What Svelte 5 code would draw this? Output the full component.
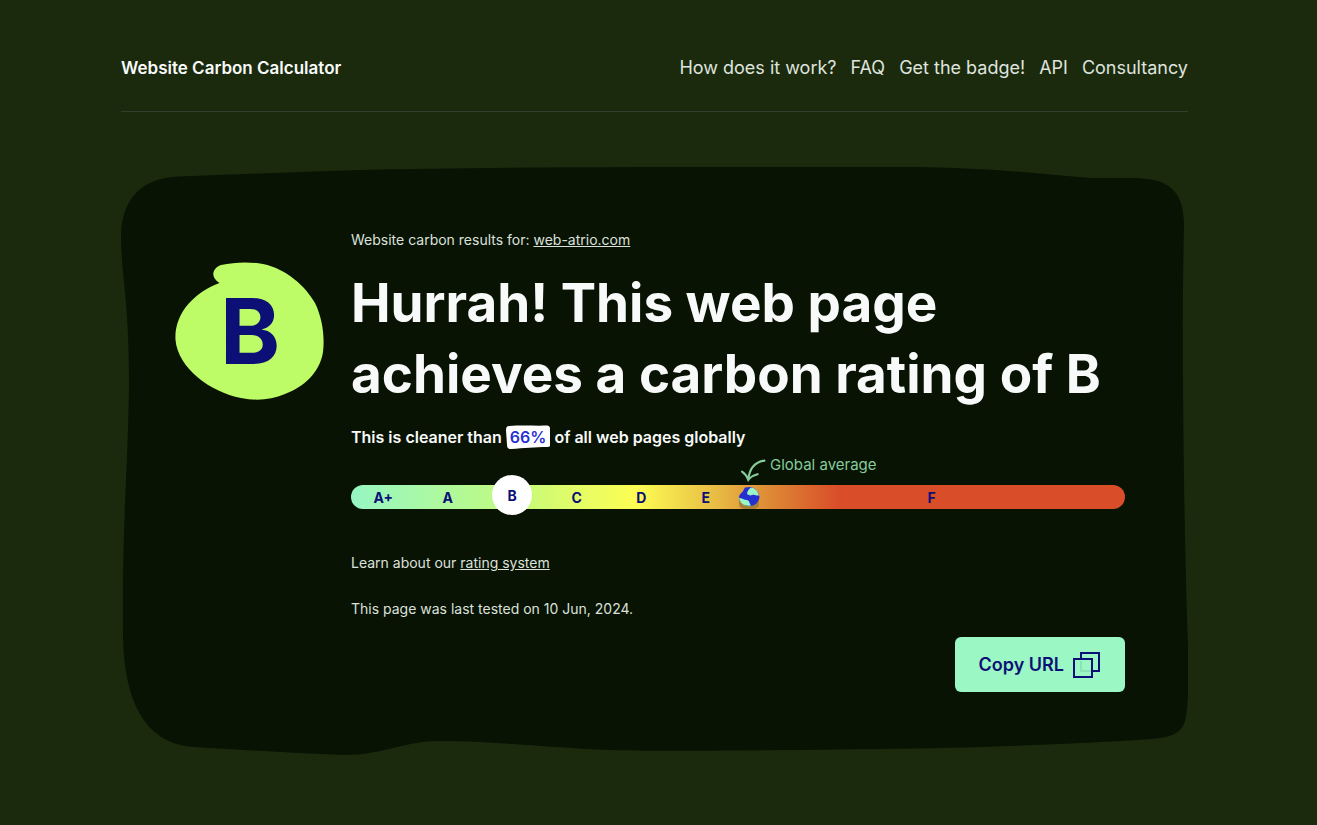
<script>
  const links = ['How does it work?', 'FAQ', 'Get the badge!', 'API', 'Consultancy'];
  const grades = ['A+', 'A', 'B', 'C', 'D', 'E', 'F'];
  const rating = 'B';
  const cleanerThan = 66;

  function copyUrl() {
    navigator.clipboard?.writeText(location.href);
  }
</script>

<div class="page">
  <header>
    <a class="brand" href="#home">Website Carbon Calculator</a>
    <nav>
      {#each links as link}
        <a href="#top">{link}</a>
      {/each}
    </nav>
  </header>

  <main>
    <svg class="blob" viewBox="0 0 1067 588" preserveAspectRatio="none" aria-hidden="true">
      <path
        d="M58 9.500C120 7 180 5 240 3C400 -0.500 640 -0.500 800 0C890 2 925 8 970 11C1000 11.500 1015 10 1033 13C1054 18 1063 32 1063 58C1062 110 1061.500 150 1062 210C1062.500 300 1064 380 1066 450C1068 500 1068 530 1065 550C1062 566 1052 570 1030 572C960 577 850 581 760 582C660 583 560 585 490 583C420 580 370 574 320 574C280 574 265 588 222 588C175 586 120 583 73 580C22 577 2 530 2 465C1 350 7 310 8 215C8 130 0 110 0 66C2 32 20 11 58 9.500Z"
      />
    </svg>

    <div class="badge">
      <svg viewBox="0 0 150 139" aria-hidden="true">
        <path
          d="M44.500 21C36 16 36 7 46 3C60 0 74 -0.500 88 2C112 7 131 25 140 41C147 55 150 74 148 90C145 110 129 125 110 132C96 138 81 139 66 136C35 130 3 106 0.500 78C-1 51 20 30 44.500 21Z"
        />
      </svg>
      <span>{rating}</span>
    </div>

    <section>
      <p class="small">Website carbon results for: <a href="#site">web-atrio.com</a></p>
      <h1>Hurrah! This web page achieves a carbon rating of {rating}</h1>
      <p class="cleaner">
        This is cleaner than
        <span class="percent">
          <svg viewBox="0 0 44 23" preserveAspectRatio="none" aria-hidden="true">
            <path d="M3 1C15 0 30 1 41 0.500C43 1 43.500 2 43.500 4L44 18C44 20 43 21 41 21C28 21 18 22 5 23C2 23 1 22 1 19L0 5C0 2 1 1 3 1Z" />
          </svg>
          <span>{cleanerThan}%</span>
        </span>
        of all web pages globally
      </p>

      <div class="scale">
        {#each grades as grade}
          <span class="grade" class:current={grade === rating}>
            <b>{grade}</b>
          </span>
        {/each}
        <div class="average">
          <svg class="arrow" viewBox="0 0 24 22" aria-hidden="true">
            <path d="M22.500 1.500C13 3 8 9 7 20M1 12C4 14 6 17 7 20C9 17 12 15.500 16 14.500" />
          </svg>
          <span>Global average</span>
        </div>
        <svg class="globe" viewBox="0 0 22 24" aria-hidden="true">
          <rect x="1" y="8" width="20" height="15" rx="5" fill="#a98138" />
          <path d="M7 1.500L12 1C17 1.500 20.500 5 21.500 11C21 16 17 20 12 20C6 20 2 17 1 12C1 8 4 7 5 5Z" fill="#2530d0" />
          <path d="M9 8C9 5 11 3 13 1.500C17 2 20 5 21 9.500C18 10 17 8 14 9C12 10 11 9 9 8Z" fill="#99f6c4" />
          <path d="M1 12C4 12 6 14 9 14C12 15 11 17 13 19.500C7 20.500 2 18 1 12Z" fill="#99f6c4" />
        </svg>
      </div>

      <p class="small learn">Learn about our <a href="#rating">rating system</a></p>
      <p class="small tested">This page was last tested on 10 Jun, 2024.</p>

      <button type="button" onclick={copyUrl}>
        Copy URL
        <svg viewBox="0 0 28 28" aria-hidden="true">
          <rect x="8" y="2" width="18" height="18" />
          <rect class="front" x="1" y="8" width="18" height="18" />
          <path class="hidden-edge" d="M8 10V20H18" />
        </svg>
      </button>
    </section>
  </main>
</div>

<style>
  :global(body) {
    margin: 0;
    background: #1b2a0d;
  }

  .page {
    box-sizing: border-box;
    min-height: 100vh;
    padding: 0 129px 48px 121px;
    color: #f8fafa;
    font-family: Inter, sans-serif;
  }

  a {
    color: inherit;
  }

  p,
  h1 {
    margin: 0;
  }

  header {
    display: flex;
    align-items: center;
    justify-content: space-between;
    padding: 56px 0 31px;
    border-bottom: 1px solid #313f2c;
    line-height: 24px;
  }

  header a {
    text-decoration: none;
  }

  .brand {
    font-size: 17px;
    font-weight: 600;
  }

  nav {
    display: flex;
    gap: 14px;
    font-size: 18px;
    color: #dfe4df;
  }

  main {
    position: relative;
    display: grid;
    grid-template-columns: 150px 1fr;
    column-gap: 26px;
    margin-top: 55px;
    padding: 61px 63px 63px 54px;
  }

  .blob {
    position: absolute;
    inset: 0;
    width: 100%;
    height: 100%;
    fill: #081303;
  }

  .badge {
    position: relative;
    display: grid;
    place-items: center;
    align-self: start;
    margin-top: 34px;
    height: 139px;
    color: #0c0f76;
    font-size: 91px;
    font-weight: 700;
    line-height: 1;
  }

  .badge > * {
    grid-area: 1 / 1;
  }

  .badge svg {
    width: 150px;
    height: 139px;
    fill: #bdfb67;
  }

  section {
    position: relative;
    display: flex;
    flex-direction: column;
  }

  .small {
    font-size: 14px;
    line-height: 24px;
    color: #dce1dc;
  }

  h1 {
    margin-top: 16px;
    font-size: 53px;
    font-weight: 650;
    line-height: 71px;
  }

  .cleaner {
    margin-top: 15px;
    font-size: 16px;
    font-weight: 600;
    line-height: 24px;
  }

  .percent {
    position: relative;
    display: inline-block;
    padding: 0 4px;
    color: #2630cf;
  }

  .percent svg {
    position: absolute;
    inset: 0;
    width: 100%;
    height: 100%;
    fill: #fff;
  }

  .percent span {
    position: relative;
  }

  .scale {
    position: relative;
    display: grid;
    grid-template-columns: repeat(6, 1fr) 6fr;
    height: 24px;
    margin-top: 36px;
    border-radius: 12px;
    background: linear-gradient(90deg, #96f6c3 0%, #b0f99a 13%, #c5fa7a 22%, #e7fd64 30%, #fdfd52 37%, #e8bd45 47%, #de8a35 54%, #d94d29 63%);
    color: #0c0f76;
    font-size: 14px;
  }

  .grade {
    display: grid;
    place-items: center;
  }

  .grade b {
    font-weight: 700;
  }

  .current b {
    display: grid;
    place-items: center;
    width: 40px;
    height: 40px;
    margin: -10px 0 -6px;
    border-radius: 50%;
    background: #fff;
  }

  .average {
    position: absolute;
    left: 390px;
    bottom: 27px;
    display: flex;
    gap: 4px;
    color: #86cb9b;
    font-size: 15px;
    line-height: 24px;
  }

  .arrow {
    width: 25px;
    height: 23px;
    margin-top: 6px;
    fill: none;
    stroke: currentColor;
    stroke-width: 2;
    stroke-linecap: round;
  }

  .globe {
    position: absolute;
    left: 387px;
    top: 1px;
    width: 22px;
    height: 24px;
  }

  .learn {
    margin-top: 42px;
  }

  .tested {
    margin-top: 22px;
  }

  button {
    display: flex;
    align-items: center;
    align-self: flex-end;
    gap: 9px;
    height: 55px;
    margin-top: 16px;
    padding: 0 24px;
    border: 0;
    border-radius: 6px;
    background: #9bf7c3;
    color: #0c0f76;
    font: 600 18px Inter, sans-serif;
    cursor: pointer;
  }

  button svg {
    width: 28px;
    height: 28px;
    fill: none;
    stroke: currentColor;
    stroke-width: 2;
  }

  button .front {
    fill: #9bf7c3;
  }

  .hidden-edge {
    stroke: #8ce3b8;
  }
</style>
